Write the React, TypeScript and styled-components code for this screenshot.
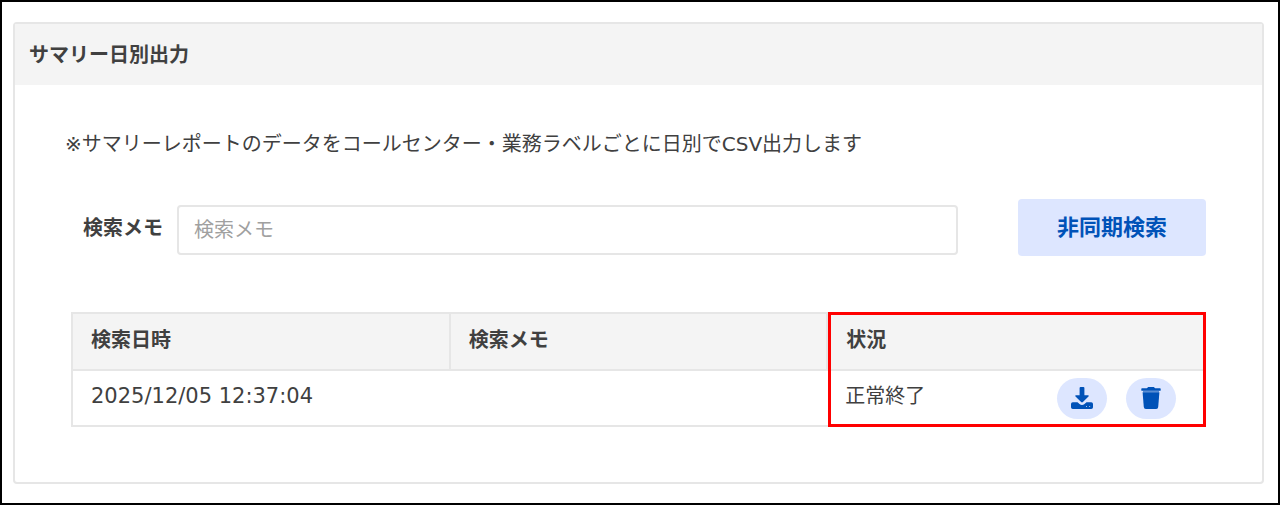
import React from "react";
import styled, { createGlobalStyle } from "styled-components";

const GlobalStyle = createGlobalStyle`
  *, *::before, *::after { box-sizing: border-box; }
  body {
    margin: 0;
    background: #fff;
    color: #404040;
    font-family: "DejaVu Sans", "Noto Sans CJK JP", sans-serif;
    font-size: 20px;
    line-height: 28px;
  }
`;

const Page = styled.main`
  min-height: 100vh;
  padding: 20px 14px 19px 11px;
  border: 2px solid #000;
  display: flex;
  flex-direction: column;
`;

const Panel = styled.section`
  flex: 1;
  border: 2px solid #e6e6e6;
  border-radius: 4px;
`;

const PanelHeader = styled.header`
  padding: 17px 14px 16px;
  background: #f4f4f4;
`;

const PanelTitle = styled.h1`
  margin: 0;
  font-size: 20px;
  line-height: 28px;
`;

const PanelBody = styled.div`
  padding: 45px 56px 55px;
`;

const Note = styled.p`
  margin: 0 0 41px -6px;
`;

const SearchForm = styled.form`
  display: flex;
  align-items: center;
  margin: 0 0 56px;
  padding-left: 12px;
`;

const FieldLabel = styled.label`
  flex: none;
  margin-right: 14px;
  font-weight: 700;
`;

const TextField = styled.input`
  flex: 1;
  min-width: 0;
  height: 50px;
  margin: 4px 60px 0 0;
  padding: 0 15px;
  border: 2px solid #e6e6e6;
  border-radius: 4px;
  color: inherit;
  font: inherit;

  &::placeholder { color: #a0a0a0; opacity: 1; }
`;

const SearchButton = styled.button`
  flex: none;
  height: 57px;
  padding: 0 39px 6px;
  border: 0;
  border-radius: 4px;
  background: #dde6ff;
  color: #0052b8;
  font-family: inherit;
  font-size: 22px;
  font-weight: 700;
  cursor: pointer;
`;

const TableArea = styled.div`
  position: relative;
`;

const ResultTable = styled.table`
  width: 100%;
  table-layout: fixed;
  border-collapse: collapse;
  border: 2px solid #e6e6e6;
`;

const HeadCell = styled.th`
  height: 57px;
  padding: 0 18px 4px;
  border: 2px solid #e6e6e6;
  background: #f4f4f4;
  text-align: left;
`;

const Cell = styled.td`
  height: 56px;
  padding: 0 18px 4px;
`;

const DateTime = styled.time`
  font-size: 21px;
`;

const StatusRow = styled.div`
  display: flex;
  align-items: center;
  justify-content: space-between;
`;

const Actions = styled.div`
  display: flex;
  gap: 19px;
  padding: 4px 10px 0 0;
`;

const IconButton = styled.button`
  display: grid;
  place-items: center;
  width: 50px;
  height: 41px;
  padding: 0;
  border: 0;
  border-radius: 21px;
  background: #dde6ff;
  color: #0052b8;
  cursor: pointer;
`;

const Highlight = styled.div`
  position: absolute;
  inset: 0 0 0 auto;
  width: calc(100% / 3);
  border: 3px solid #f00;
  pointer-events: none;
`;

function DownloadIcon() {
  return (
    <svg width="22" height="22" viewBox="0 0 22 22" fill="currentColor" aria-hidden="true">
      <path d="M9.600 0h2.800q1 0 1 1v7.200h3.800q1.100.3.3 1.300l-5.600 5.600q-.9.8-1.800 0L4.500 9.500q-.8-1 .3-1.300h3.800V1q0-1 1-1Z" />
      <path fillRule="evenodd" d="M1.800 15.200h4.700l2 1.900q2.500 1.900 5 0l2-1.900h4.700q1.800 0 1.800 1.800v3.200q0 1.800-1.800 1.800H1.800Q0 22 0 20.200V17q0-1.800 1.800-1.800ZM15.500 19a.5.5 0 1 0 0 1 .5.5 0 0 0 0-1ZM18.700 19a.5.5 0 1 0 0 1 .5.5 0 0 0 0-1Z" />
    </svg>
  );
}

function TrashIcon() {
  return (
    <svg width="20" height="22" viewBox="0 0 20 22" fill="currentColor" aria-hidden="true">
      <path d="M7.200 0h5.600l1.400 1.200H19q.7 0 .7.700v1.300q0 .6-.7.600H1q-.7 0-.7-.6V1.900Q.3 1.200 1 1.200h4.800Z" />
      <path d="M1.600 5.200h16.800l-1.200 14.900q-.2 1.900-2 1.900H4.800q-1.800 0-2-1.900Z" />
      <path d="M2 3.800h16v1.400H2Z" opacity=".6" />
    </svg>
  );
}

export default function App() {
  return (
    <>
      <GlobalStyle />
      <Page>
        <Panel>
          <PanelHeader>
            <PanelTitle>サマリー日別出力</PanelTitle>
          </PanelHeader>
          <PanelBody>
            <Note>※サマリーレポートのデータをコールセンター・業務ラベルごとに日別でCSV出力します</Note>
            <SearchForm onSubmit={(event: React.FormEvent) => event.preventDefault()}>
              <FieldLabel htmlFor="memo">検索メモ</FieldLabel>
              <TextField id="memo" type="text" placeholder="検索メモ" />
              <SearchButton type="submit">非同期検索</SearchButton>
            </SearchForm>
            <TableArea>
              <ResultTable>
                <thead>
                  <tr>
                    <HeadCell scope="col">検索日時</HeadCell>
                    <HeadCell scope="col">検索メモ</HeadCell>
                    <HeadCell scope="col">状況</HeadCell>
                  </tr>
                </thead>
                <tbody>
                  <tr>
                    <Cell>
                      <DateTime dateTime="2025-12-05T12:37:04">2025/12/05 12:37:04</DateTime>
                    </Cell>
                    <Cell />
                    <Cell>
                      <StatusRow>
                        <span>正常終了</span>
                        <Actions>
                          <IconButton type="button" aria-label="ダウンロード">
                            <DownloadIcon />
                          </IconButton>
                          <IconButton type="button" aria-label="削除">
                            <TrashIcon />
                          </IconButton>
                        </Actions>
                      </StatusRow>
                    </Cell>
                  </tr>
                </tbody>
              </ResultTable>
              <Highlight />
            </TableArea>
          </PanelBody>
        </Panel>
      </Page>
    </>
  );
}
